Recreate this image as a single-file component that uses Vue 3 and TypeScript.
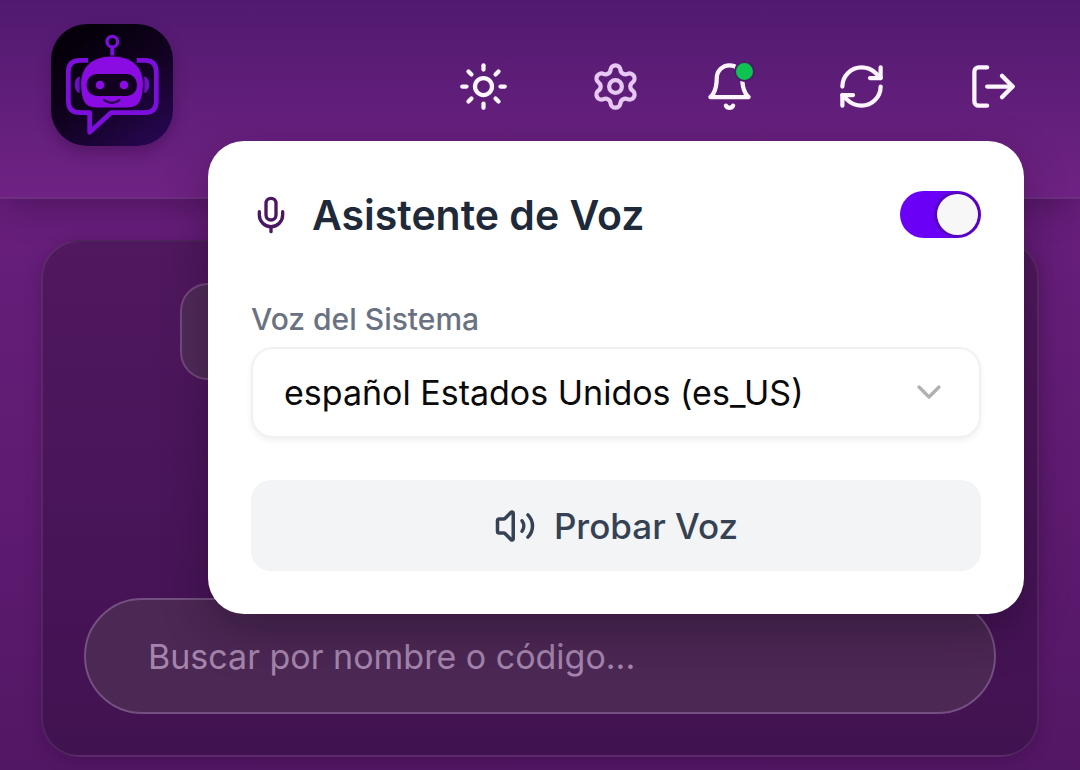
<script setup lang="ts">
import { ref } from 'vue'

interface HeaderAction {
  id: string
  label: string
  paths: string[]
  circle?: number
  badge?: boolean
}

const actions: HeaderAction[] = [
  {
    id: 'theme',
    label: 'Cambiar tema',
    circle: 4,
    paths: ['M12 2v2', 'M12 20v2', 'm4.93 4.93 1.41 1.41', 'm17.66 17.66 1.41 1.41', 'M2 12h2', 'M20 12h2', 'm6.34 17.66-1.41 1.41', 'm19.07 4.93-1.41 1.41'],
  },
  {
    id: 'settings',
    label: 'Ajustes',
    circle: 3,
    paths: ['M9.671 4.136a2.34 2.34 0 0 1 4.659 0 2.34 2.34 0 0 0 3.319 1.915 2.34 2.34 0 0 1 2.33 4.033 2.34 2.34 0 0 0 0 3.831 2.34 2.34 0 0 1-2.33 4.033 2.34 2.34 0 0 0-3.319 1.915 2.34 2.34 0 0 1-4.659 0 2.34 2.34 0 0 0-3.32-1.915 2.34 2.34 0 0 1-2.33-4.033 2.34 2.34 0 0 0 0-3.831A2.34 2.34 0 0 1 6.35 6.051a2.34 2.34 0 0 0 3.319-1.915'],
  },
  {
    id: 'alerts',
    label: 'Notificaciones',
    badge: true,
    paths: ['M6 8a6 6 0 0 1 12 0c0 7 3 9 3 9H3s3-2 3-9', 'M10.3 21a1.94 1.94 0 0 0 3.4 0'],
  },
  {
    id: 'refresh',
    label: 'Actualizar',
    paths: ['M3 12a9 9 0 0 1 9-9 9.75 9.75 0 0 1 6.74 2.74L21 8', 'M21 3v5h-5', 'M21 12a9 9 0 0 1-9 9 9.75 9.75 0 0 1-6.74-2.74L3 16', 'M8 16H3v5'],
  },
  {
    id: 'logout',
    label: 'Cerrar sesión',
    paths: ['M9 21H5a2 2 0 0 1-2-2V5a2 2 0 0 1 2-2h4', 'm16 17 5-5-5-5', 'M21 12H9'],
  },
]

const voices = [{ id: 'es_US', name: 'español Estados Unidos (es_US)' }]
const voice = ref('es_US')
const enabled = ref(true)
const query = ref('')
</script>

<template>
  <div class="page">
    <header class="header">
      <div class="logo">
        <svg viewBox="33 42 366 366" fill="none" aria-hidden="true">
          <g class="logo-line" stroke-width="14" stroke-linejoin="round">
            <path d="M144 151H120Q85 151 85 186V273Q85 308 120 308H149V367L213 308H314Q349 308 349 273V186Q349 151 314 151H290" />
            <circle cx="217" cy="95" r="16" stroke-width="10" />
            <path d="M217 111V145" stroke-width="12" />
          </g>
          <path class="logo-fill" d="M119 199C99 206 99 243 119 250ZM313 199C333 206 333 243 313 250Z" />
          <path class="logo-head" d="M122 230C118 172 156 138 216 138S314 172 310 230C308 268 300 294 262 294H170C132 294 124 268 122 230Z" />
          <rect class="logo-dark" x="140" y="192" width="151" height="66" rx="31" />
          <circle class="logo-eye" cx="180" cy="225" r="13" />
          <circle class="logo-eye" cx="252" cy="225" r="13" />
          <path class="logo-mouth" d="M193 271Q216 286 238 271" />
        </svg>
      </div>
      <nav class="actions" aria-label="Acciones">
        <button v-for="a in actions" :key="a.id" type="button" class="action" :class="a.id" :aria-label="a.label">
          <span class="glyph">
            <svg class="icon" viewBox="0 0 24 24" aria-hidden="true">
              <circle v-if="a.circle" cx="12" cy="12" :r="a.circle" />
              <path v-for="d in a.paths" :key="d" :d="d" />
            </svg>
            <span v-if="a.badge" class="badge"></span>
          </span>
        </button>
      </nav>

      <section class="popover" aria-labelledby="voice-title">
        <div class="title-row">
          <svg class="icon mic" viewBox="0 0 24 24" aria-hidden="true">
            <path d="M12 19v3" />
            <path d="M19 10v2a7 7 0 0 1-14 0v-2" />
            <rect x="9" y="2" width="6" height="13" rx="3" />
          </svg>
          <label id="voice-title" class="title" for="voice-on">Asistente de Voz</label>
          <input id="voice-on" v-model="enabled" class="switch" type="checkbox" role="switch" />
        </div>
        <label class="field-label" for="voice">Voz del Sistema</label>
        <div class="select-box">
          <select id="voice" v-model="voice" class="select">
            <option v-for="v in voices" :key="v.id" :value="v.id">{{ v.name }}</option>
          </select>
          <svg class="icon chevron" viewBox="0 0 24 24" aria-hidden="true"><path d="m6 9 6 6 6-6" /></svg>
        </div>
        <button type="button" class="test">
          <svg class="icon volume" viewBox="0 0 24 24" aria-hidden="true">
            <path d="M11 4.702a.705.705 0 0 0-1.203-.498L6.413 7.587A1.4 1.4 0 0 1 5.416 8H3a1 1 0 0 0-1 1v6a1 1 0 0 0 1 1h2.416a1.4 1.4 0 0 1 .997.413l3.383 3.384A.705.705 0 0 0 11 19.298z" />
            <path d="M16 9a5 5 0 0 1 0 6" />
            <path d="M19.364 18.364a9 9 0 0 0 0-12.728" />
          </svg>
          Probar Voz
        </button>
      </section>
    </header>

    <main class="main">
      <section class="card">
        <div class="chip"></div>
        <input v-model="query" class="search" type="search" aria-label="Buscar" placeholder="Buscar por nombre o código..." />
      </section>
    </main>
  </div>
</template>

<style>
body {
  margin: 0;
  background: #511762;
}
</style>

<style scoped>
.page {
  min-height: 100vh;
  box-sizing: border-box;
  background: linear-gradient(#6c2080 0, #661e7a 240px, #5c1a6e 560px, #521764 770px);
  font-family: Inter, "Liberation Sans", sans-serif;
}

.page *,
.page *::before {
  box-sizing: border-box;
}

button,
input,
select {
  margin: 0;
  font-family: inherit;
}

.header {
  position: relative;
  z-index: 1;
  display: flex;
  justify-content: space-between;
  align-items: flex-start;
  padding: 24px 39px 49px 51px;
  border-bottom: 2px solid #6d2f80;
  background: linear-gradient(#511a70, #6f2283);
  box-shadow: 0 12px 32px -6px rgba(40, 5, 50, 0.4);
}

.logo {
  width: 122px;
  height: 122px;
  border-radius: 36px;
  overflow: hidden;
  background: linear-gradient(145deg, #050009 15%, #10021f 50%, #2a0758);
  box-shadow: 0 6px 14px rgba(50, 5, 60, 0.35);
}

.logo svg {
  display: block;
  width: 100%;
  height: 100%;
}

.logo-line {
  stroke: #7d0fdc;
}

.logo-fill {
  fill: #6c10c4;
}

.logo-head {
  fill: #8a0ce2;
  stroke: #12021f;
  stroke-width: 3;
}

.logo-dark {
  fill: #12011f;
}

.logo-eye {
  fill: #8a0ce2;
}

.logo-mouth {
  stroke: #2b0550;
  stroke-width: 7;
  stroke-linecap: round;
}

.actions {
  display: flex;
  gap: 36px;
}

.action {
  display: flex;
  align-items: center;
  justify-content: center;
  width: 96px;
  height: 124px;
  padding: 0;
  border: 0;
  background: none;
  color: #fff5ff;
}

.settings {
  color: #e6c8f3;
}

.alerts {
  width: 78px;
  padding-right: 18px;
}

.glyph {
  position: relative;
  display: block;
  width: 51px;
  height: 51px;
}

.icon {
  display: block;
  flex: none;
  width: 100%;
  height: 100%;
  fill: none;
  stroke: currentColor;
  stroke-width: 2;
  stroke-linecap: round;
  stroke-linejoin: round;
}

.badge {
  position: absolute;
  top: 0;
  right: 0;
  width: 21px;
  height: 21px;
  border: 2px solid #4d1d6b;
  border-radius: 50%;
  background: #0fc353;
}

.popover {
  position: absolute;
  top: 141px;
  right: 56px;
  width: min(816px, calc(100% - 112px));
  padding: 43px;
  border-radius: 36px;
  background: #fff;
  box-shadow: 0 18px 48px -4px rgba(20, 5, 25, 0.4);
}

.title-row {
  display: flex;
  align-items: center;
  height: 61px;
  margin-bottom: 54px;
}

.mic {
  width: 40px;
  height: 40px;
  margin-right: 21px;
  color: #4a1763;
}

.title {
  flex: 1;
  color: #1e2939;
  font-size: 41px;
  font-weight: 600;
  line-height: 60px;
}

.switch {
  appearance: none;
  display: flex;
  align-items: center;
  justify-content: flex-start;
  width: 81px;
  height: 47px;
  padding: 3px;
  border-radius: 24px;
  overflow: hidden;
  background: #b9b9c2;
}

.switch::before {
  content: "";
  width: 41px;
  height: 41px;
  border-radius: 50%;
  background: #f7f7f7;
  box-shadow: 0 0 2px 3px rgba(50, 10, 90, 0.35);
}

.switch:checked {
  justify-content: flex-end;
  background: #6a00f6;
}

.field-label {
  display: block;
  margin-bottom: 8px;
  color: #6a7282;
  font-size: 30px;
  font-weight: 500;
  line-height: 40px;
}

.select-box {
  position: relative;
  margin-bottom: 42px;
}

.select {
  appearance: none;
  display: block;
  width: 100%;
  height: 91px;
  padding: 0 90px 0 31px;
  border: 2px solid #f1f1f2;
  border-radius: 22px;
  background: #fff;
  color: #0a0a0a;
  font-size: 34px;
  box-shadow: 0 3px 6px rgba(0, 0, 0, 0.06);
}

.chevron {
  position: absolute;
  top: 25px;
  right: 32px;
  width: 40px;
  height: 40px;
  color: #b0b0b0;
  pointer-events: none;
}

.test {
  display: flex;
  align-items: center;
  justify-content: center;
  gap: 18px;
  width: 100%;
  height: 91px;
  padding: 0;
  border: 0;
  border-radius: 20px;
  background: #f2f4f6;
  color: #364153;
  font-size: 35px;
  font-weight: 500;
}

.volume {
  width: 42px;
  height: 42px;
}

.main {
  padding: 41px 41px 13px;
}

.card {
  display: flex;
  flex-direction: column;
  align-items: center;
  gap: 218px;
  padding: 41px;
  border: 2px solid rgba(255, 255, 255, 0.08);
  border-radius: 38px;
  background: linear-gradient(#50185e, #4a155a 50%, #411250);
  box-shadow: 0 4px 16px rgba(50, 5, 60, 0.3);
}

.chip {
  width: 79%;
  height: 97px;
  border: 2px solid #75487f;
  border-radius: 28px;
  background: #4f2b58;
}

.search {
  appearance: none;
  width: 100%;
  height: 116px;
  padding: 0 62px;
  border: 2px solid #735080;
  border-radius: 58px;
  outline: 0;
  background: #4c2854;
  color: #fff;
  font-size: 34px;
}

.search::placeholder {
  color: #a585ad;
  opacity: 1;
}
</style>
